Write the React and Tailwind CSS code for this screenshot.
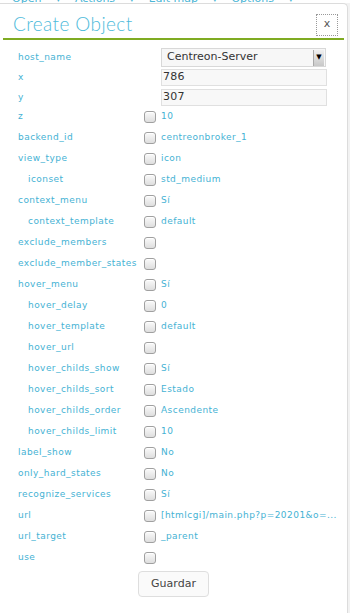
import React from "react";

const rows = [
  { k: "z", v: "10" },
  { k: "backend_id", v: "centreonbroker_1" },
  { k: "view_type", v: "icon" },
  { k: "iconset", v: "std_medium", ind: true },
  { k: "context_menu", v: "Sí" },
  { k: "context_template", v: "default", ind: true },
  { k: "exclude_members", v: "" },
  { k: "exclude_member_states", v: "" },
  { k: "hover_menu", v: "Sí" },
  { k: "hover_delay", v: "0", ind: true },
  { k: "hover_template", v: "default", ind: true },
  { k: "hover_url", v: "", ind: true },
  { k: "hover_childs_show", v: "Sí", ind: true },
  { k: "hover_childs_sort", v: "Estado", ind: true },
  { k: "hover_childs_order", v: "Ascendente", ind: true },
  { k: "hover_childs_limit", v: "10", ind: true },
  { k: "label_show", v: "No" },
  { k: "only_hard_states", v: "No" },
  { k: "recognize_services", v: "Sí" },
  { k: "url", v: "[htmlcgi]/main.php?p=20201&o=..." },
  { k: "url_target", v: "_parent" },
  { k: "use", v: "" },
];

function Check() {
  return (
    <span className="block shrink-0 w-[12px] h-[12px] rounded-[3px] border border-[#a0a0a0] bg-gradient-to-b from-[#fafafa] to-[#dedede] shadow-[inset_0_1px_0_#fff]" />
  );
}

export default function App() {
  const font = { fontFamily: '"DejaVu Sans", Verdana, sans-serif' };
  return (
    <div className="w-[350px] h-[613px] bg-[#f2f2f2] overflow-hidden relative" style={font}>
      <div className="h-[3px] overflow-hidden bg-white">
        <div className="-mt-[9px] pl-[12px] flex gap-[14px] text-[11px] text-[#4bb6d6] whitespace-nowrap">
          <span>Open</span><span>▾</span><span>Actions</span><span>▾</span><span>Edit map</span><span>▾</span><span>Options</span><span>▾</span>
        </div>
      </div>
      <div className="w-[348px] h-[610px] bg-white rounded-tr-[5px] border-r border-t border-[#dcdcdc]">
        <div className="flex items-center justify-between pl-[13px] pr-[9px] pt-[7px] h-[34px]">
          <span className="text-[19px] font-light text-[#4fbbdb] tracking-[0.4px]" style={{ fontFamily: 'Lato, "Open Sans", sans-serif' }}>Create Object</span>
          <span className="w-[22px] h-[22px] border border-dotted border-[#999] flex items-center justify-center text-[11px] text-[#555]">x</span>
        </div>
        <div className="mx-[3px] h-[2px] bg-[#7fab22]" />
        <div className="pl-[18px] pt-[8px] text-[9px] text-[#45b2d4] tracking-[0.45px]">
          <div className="flex items-center h-[19px]">
            <span className="w-[143px] shrink-0">host_name</span>
            <div className="w-[165px] h-[19px] border border-[#d8d8d8] bg-[#f7f7f7] flex items-center justify-between pl-[5px] text-[11px] text-[#333] tracking-normal">
              <span>Centreon-Server</span>
              <span className="w-[11px] h-[16px] mr-[1px] bg-gradient-to-b from-[#f0f0f0] to-[#c8c8c8] border-l border-[#aaa] flex items-center justify-center text-[7px] text-black">▼</span>
            </div>
          </div>
          <div className="flex items-center h-[19px] mt-[1px]">
            <span className="w-[143px] shrink-0">x</span>
            <div className="w-[166px] h-[17px] border border-[#e0e0e0] bg-[#f8f8f8] flex items-center pl-[1px] text-[11px] text-[#333] tracking-[0.3px]">786</div>
          </div>
          <div className="flex items-center h-[19px] mt-[1px]">
            <span className="w-[143px] shrink-0">y</span>
            <div className="w-[166px] h-[17px] border border-[#e0e0e0] bg-[#f8f8f8] flex items-center pl-[1px] text-[11px] text-[#333] tracking-[0.3px]">307</div>
          </div>
          {rows.map((r, i) => (
            <div key={r.k} className={"flex items-center h-[21px] " + (i === 0 ? "-mt-[1px]" : "")}>
              <span className={"w-[126px] shrink-0 whitespace-nowrap " + (r.ind ? "pl-[10px]" : "")}>{r.k}</span>
              <Check />
              <span className="ml-[5px] whitespace-nowrap">{r.v}</span>
            </div>
          ))}
          <div className="flex pl-[120px] pt-[3px]">
            <span className="w-[71px] h-[26px] rounded-[4px] border border-[#dedede] bg-[#fafafa] flex items-center justify-center text-[11px] text-[#444] tracking-normal">Guardar</span>
          </div>
        </div>
      </div>
    </div>
  );
}
